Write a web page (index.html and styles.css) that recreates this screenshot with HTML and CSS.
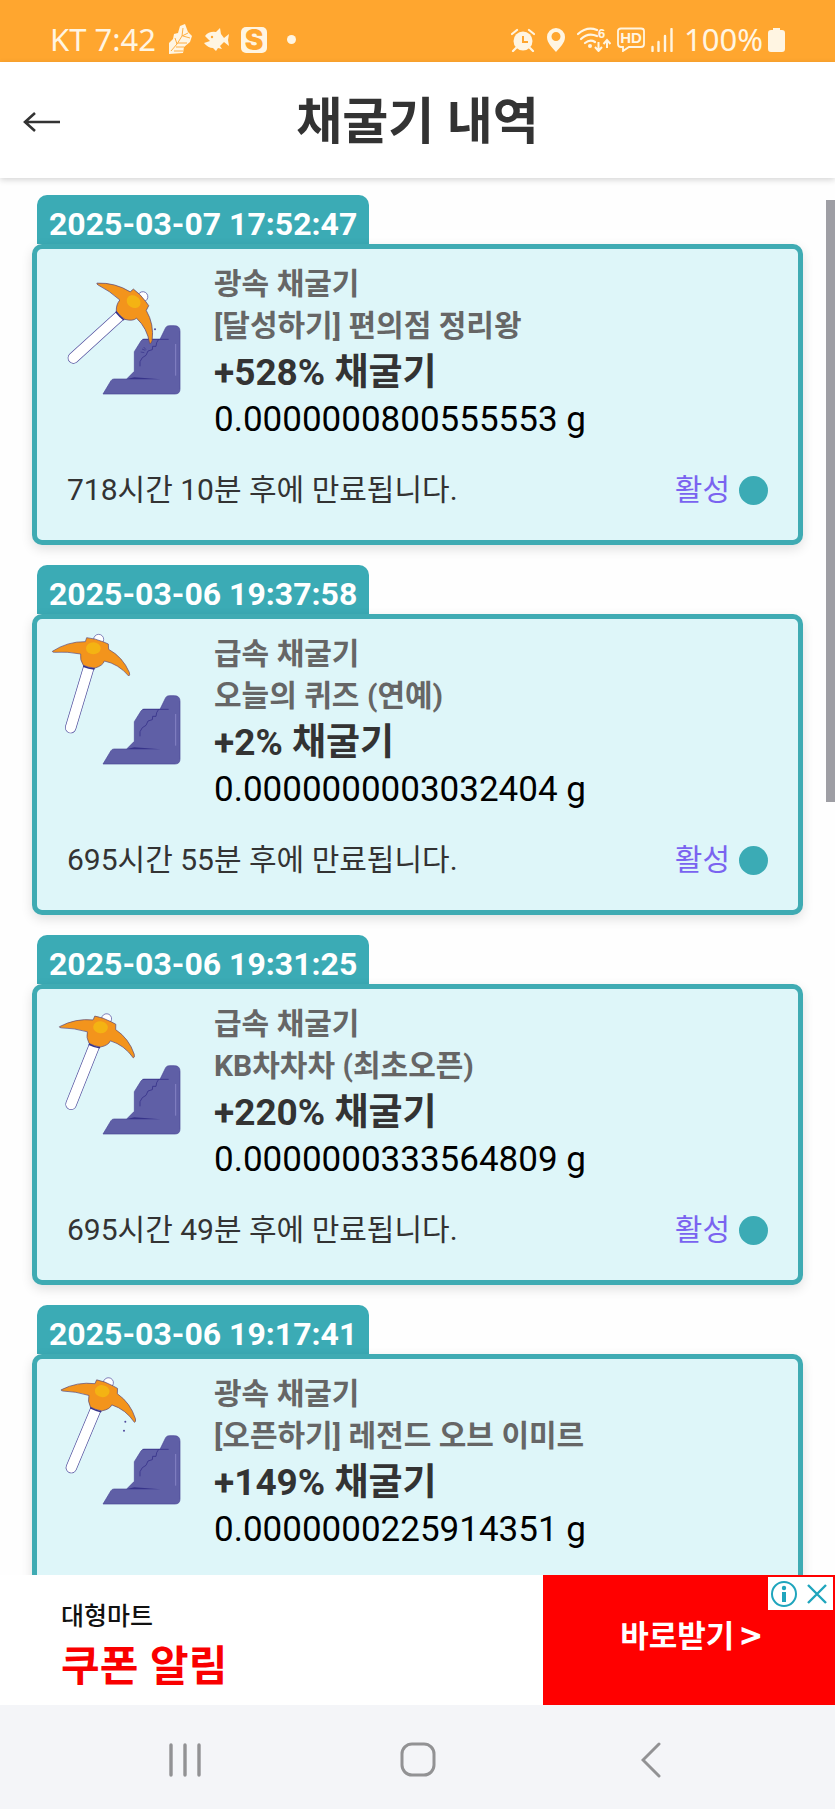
FILE: index.html
```html
<!DOCTYPE html>
<html lang="ko">
<head>
<meta charset="utf-8">
<meta name="viewport" content="width=device-width, initial-scale=1">
<title>채굴기 내역</title>
<link rel="stylesheet" href="styles.css">
</head>
<body>
<svg class="defs" aria-hidden="true">
  <symbol id="rock" viewBox="0 0 480 480">
    <path d="M198 435 L222 395 Q225 390 231 390 H269 L292 367 V308 L312 276 Q315 271 321 271 H369 L386 236 Q389 230 397 230 H412 Q429 230 429 247 V420 Q429 435 414 435 Z" fill="#5f5fa6" stroke="#4a4696" stroke-width="2"/>
    <path d="M317 271 H395 M365 271 L359 281 L357 292 H347 L346 302 L333 306 L327 319 L316 326 L309 338 V352" fill="none" stroke="#37338a" stroke-width="2.500"/>
    <path d="M266 391 L292 385 L370 391 Z" fill="#37338a"/>
    <path d="M416 285 V380" stroke="#8482c4" stroke-width="3"/>
  </symbol>
  <symbol id="pick" viewBox="0 0 480 480" overflow="visible">
    <path d="M156 143 L101 326" stroke="#4f4a9c" stroke-width="34" stroke-linecap="round"/>
    <path d="M156 143 L101 326" stroke="#fff" stroke-width="30" stroke-linecap="round"/>
    <circle cx="185" cy="61" r="15" fill="#fff" stroke="#4f4a9c" stroke-width="2"/>
    <path d="M46 97 Q92 67 145 68 L149 56 Q174 58 200 69 L214 75 L215 91 Q257 114 277 160 Q280 170 275 171 Q245 135 202 126 Q198 140 174 147 Q154 146 139 139 Q128 122 131 105 Q90 97 52 100 Q46 100 46 97 Z" fill="#f3941c" stroke="#5a4778" stroke-width="2"/>
    <path d="M139 139 Q154 146 174 148 L172 152 Q154 150 138 144 Z" fill="#37338a"/>
    <ellipse cx="169" cy="88" rx="22" ry="18" fill="#f4b313"/>
  </symbol>
</svg>

<div class="app">
  <div class="status">
    <div class="status-group">
      <span class="status-text">KT 7:42</span>
      <svg width="24" height="31" viewBox="0 0 24 31"><path d="M1 19 L5 15 L6 10 L10 9 L12 2 L17 0 L20 8 L24 12 L22 18 L16 23 L15 29 L1 30 Z" fill="#fff5e2"/><path d="M3 27 L9 20 L14 12 L20 9 M9 20 L7 14 M10 19 L19 19 M8 23 L16 23 M6 27 L15 27 M15 12 L22 14 M14 12 L15 4" fill="none" stroke="#ffa62f" stroke-width="0.900"/></svg>
      <svg width="25" height="23" viewBox="0 0 25 23"><path d="M1 8 Q5 3 12 4 L16 0 L17 6 L20 10 L25 6 L24 12 L25 18 L20 14 L16 18 L18 21 L14 20 L12 23 L9 20 Q4 20 0 15 L6 13 Z" fill="#fff5e2"/><circle cx="8" cy="9" r="1.200" fill="#ffa62f"/></svg>
      <span class="s-badge">S</span>
      <span class="dot"></span>
    </div>
    <div class="status-group status-right">
      <svg class="spaced" width="24" height="24" viewBox="0 0 24 24"><circle cx="12" cy="13" r="9.500" fill="#fff5e2"/><path d="M1 6 L6 2 M23 6 L18 2 M5 20 L2 23 M19 20 L22 23" stroke="#fff5e2" stroke-width="2.200" stroke-linecap="round"/><path d="M12 8 V14 H17" fill="none" stroke="#ffa62f" stroke-width="2"/></svg>
      <svg class="spaced" width="20" height="24" viewBox="0 0 20 24"><path fill-rule="evenodd" d="M10 0 A9 9 0 0 1 19 9 C19 15 14 19 10 24 C6 19 1 15 1 9 A9 9 0 0 1 10 0 Z M10 4 A4.500 4.500 0 1 0 10 13 A4.500 4.500 0 1 0 10 4 Z" fill="#fff5e2"/></svg>
      <svg width="34" height="25" viewBox="0 0 34 25"><path d="M1 7 Q10 -1 20 3 M4 12 Q11 5 20 9 M8 16 Q13 12 18 15" fill="none" stroke="#fff5e2" stroke-width="2.200" stroke-linecap="round"/><circle cx="13" cy="19" r="2" fill="#fff5e2"/><path d="M21.500 15 V23 M18 20 L21.500 24 L25 20 M30 21 V14 M26.500 17 L30 13 L33.500 17" fill="none" stroke="#fff5e2" stroke-width="2"/><text x="21" y="11" class="tiny">6</text></svg>
      <svg width="28" height="25" viewBox="0 0 28 25"><path d="M4 1.500 H24 Q27 1.500 27 4 V17 Q27 20 24 20 H12 L6 24 V20 H4 Q1 20 1 17 V4 Q1 1.500 4 1.500 Z" fill="none" stroke="#fff5e2" stroke-width="1.800"/><text x="14" y="16" text-anchor="middle" class="tiny hd">HD</text></svg>
      <svg class="spaced" width="22" height="24" viewBox="0 0 22 24"><path d="M1.500 19 V23 M7.500 14 V23 M14 8 V23 M20.500 1 V23" stroke="#fff5e2" stroke-width="2.400" stroke-linecap="round"/></svg>
      <span class="power"><span class="status-text">100%</span>
      <svg width="17" height="24" viewBox="0 0 17 24"><path d="M5 0 H12 V2 H14 Q17 2 17 5 V21 Q17 24 14 24 H3 Q0 24 0 21 V5 Q0 2 3 2 H5 Z" fill="#fff5e2"/></svg></span>
    </div>
  </div>

  <header class="header">
    <button class="back" aria-label="뒤로"><svg width="38" height="20" viewBox="0 0 38 20"><path d="M37 10 H2 M12 1 L2 10 L12 19" fill="none" stroke="#333" stroke-width="2.600"/></svg></button>
    <h1 class="title">채굴기 내역</h1>
  </header>

  <main class="list">
    <article class="entry">
      <time class="date">2025-03-07 17:52:47</time>
      <div class="card">
        <div class="info">
          <svg class="art" viewBox="0 0 480 480"><use href="#rock"/><g transform="translate(8 1) rotate(31 101 326)"><use href="#pick"/></g><path d="M315 300 l10 4 M311 309 l11 2 M320 294 l7 8" stroke="#37338a" stroke-width="2"/><circle cx="354" cy="241" r="3" fill="#4f4a9c"/></svg>
          <div class="lines">
            <p class="name">광속 채굴기</p>
            <p class="name">[달성하기] 편의점 정리왕</p>
            <p class="boost">+528% 채굴기</p>
            <p class="amount">0.0000000800555553 g</p>
          </div>
        </div>
        <div class="foot"><span>718시간 10분 후에 만료됩니다.</span><span class="state">활성</span></div>
      </div>
    </article>
    <article class="entry">
      <time class="date">2025-03-06 19:37:58</time>
      <div class="card">
        <div class="info">
          <svg class="art" viewBox="0 0 480 480"><use href="#rock"/><use href="#pick"/></svg>
          <div class="lines">
            <p class="name">급속 채굴기</p>
            <p class="name">오늘의 퀴즈 (연예)</p>
            <p class="boost">+2% 채굴기</p>
            <p class="amount">0.0000000003032404 g</p>
          </div>
        </div>
        <div class="foot"><span>695시간 55분 후에 만료됩니다.</span><span class="state">활성</span></div>
      </div>
    </article>
    <article class="entry">
      <time class="date">2025-03-06 19:31:25</time>
      <div class="card">
        <div class="info">
          <svg class="art" viewBox="0 0 480 480"><use href="#rock"/><g transform="translate(1 20) rotate(5 101 326)"><use href="#pick"/></g></svg>
          <div class="lines">
            <p class="name">급속 채굴기</p>
            <p class="name">KB차차차 (최초오픈)</p>
            <p class="boost">+220% 채굴기</p>
            <p class="amount">0.0000000333564809 g</p>
          </div>
        </div>
        <div class="foot"><span>695시간 49분 후에 만료됩니다.</span><span class="state">활성</span></div>
      </div>
    </article>
    <article class="entry">
      <time class="date">2025-03-06 19:17:41</time>
      <div class="card">
        <div class="info">
          <svg class="art" viewBox="0 0 480 480"><use href="#rock"/><g transform="translate(2 0) rotate(6 101 326)"><use href="#pick"/></g><circle cx="265" cy="188" r="3" fill="#4f4a9c"/><circle cx="261" cy="215" r="3" fill="#4f4a9c"/></svg>
          <div class="lines">
            <p class="name">광속 채굴기</p>
            <p class="name">[오픈하기] 레전드 오브 이미르</p>
            <p class="boost">+149% 채굴기</p>
            <p class="amount">0.0000000225914351 g</p>
          </div>
        </div>
        <div class="foot"></div>
      </div>
    </article>
    <div class="thumb"></div>
  </main>

  <aside class="ad">
    <div class="ad-copy">
      <p class="ad-small">대형마트</p>
      <p class="ad-big">쿠폰 알림</p>
    </div>
    <a class="ad-cta" href="#">바로받기 <span class="gt">&gt;</span></a>
    <div class="ad-badge">
      <button aria-label="광고 정보"><svg width="28" height="28" viewBox="0 0 28 28"><circle cx="14" cy="14" r="12" fill="none" stroke="#1fa5bd" stroke-width="2"/><circle cx="14" cy="8" r="2.200" fill="#1fa5bd"/><path d="M14 12 V22" stroke="#1fa5bd" stroke-width="4"/></svg></button>
      <button aria-label="광고 닫기"><svg width="24" height="24" viewBox="0 0 24 24"><path d="M3 3 L21 21 M21 3 L3 21" stroke="#1fa5bd" stroke-width="2.400"/></svg></button>
    </div>
  </aside>

  <nav class="nav">
    <button aria-label="최근 앱"><svg width="32" height="34" viewBox="0 0 32 34"><path d="M2 2 V32 M16 2 V32 M30 2 V32" stroke="#929294" stroke-width="3.400" stroke-linecap="round"/></svg></button>
    <button aria-label="홈"><svg width="36" height="36" viewBox="0 0 36 36"><rect x="2" y="2" width="32" height="31" rx="10" fill="none" stroke="#929294" stroke-width="3"/></svg></button>
    <button aria-label="이전"><svg width="20" height="36" viewBox="0 0 20 36"><path d="M18 2 L2 18 L18 34" fill="none" stroke="#929294" stroke-width="3" stroke-linecap="round"/></svg></button>
  </nav>
</div>
</body>
</html>
```

FILE: styles.css
```css
* { box-sizing: border-box; }
body { margin: 0; font-family: Roboto, "Noto Sans CJK KR", sans-serif; background: #fff; color: #333; }
p, h1 { margin: 0; }
button { border: 0; background: none; padding: 0; display: flex; align-items: center; justify-content: center; }
svg { display: block; flex: none; }
.defs { position: absolute; width: 0; height: 0; }
.app { height: 100vh; display: flex; flex-direction: column; overflow: hidden; }

.status { flex: none; height: 62px; padding: 17px 50px 0; background: #ffa62f; display: flex; justify-content: space-between; }
.status-group { display: flex; align-items: center; gap: 12px; }
.status-right { gap: 6px; }
.spaced { margin-right: 5px; }
.status-text { font: 31px/45px "Noto Sans", sans-serif; color: #fff5e2; }
.s-badge { width: 26px; height: 26px; border-radius: 5px; background: #fff5e2; color: #ffa62f; font: 900 28px/26px Inter, sans-serif; text-align: center; }
.dot { width: 9px; height: 9px; margin-left: 8px; border-radius: 50%; background: #fff5e2; }
.tiny { font: 700 13px "Liberation Sans", sans-serif; fill: #fff5e2; }
.hd { font-size: 15px; }
.power { display: flex; align-items: center; gap: 5px; }

.header { flex: none; height: 116px; padding: 4px 23px 0; display: grid; grid-template-columns: 38px 1fr 38px; align-items: center; background: #fff; box-shadow: 0 2px 6px rgba(0, 0, 0, .16); z-index: 1; }
.back { height: 48px; }
.title { font-size: 50px; line-height: 72px; font-weight: 700; text-align: center; }

.list { flex: 1; min-height: 0; overflow: hidden; position: relative; padding: 17px 32px 0; background: #fefefe; }
.entry { margin-bottom: 20px; }
.date { display: block; width: fit-content; margin-left: 5px; padding: 11px 12px 2px; border-radius: 10px 10px 0 0; background: #3babb5; color: #fff; font-size: 32px; line-height: 36px; font-weight: 700; }
.card { height: 301px; border: 5px solid #3fabb3; border-radius: 10px; background: #def6f9; padding-top: 14px; box-shadow: 0 4px 12px rgba(0, 0, 0, .12); }
.info { display: flex; gap: 17px; }
.art { width: 160px; height: 160px; margin-top: -14px; }
.lines { white-space: nowrap; }
.name { font-size: 30px; line-height: 42px; font-weight: 700; color: #666; }
.boost { font-size: 37px; line-height: 52px; font-weight: 700; }
.amount { font-size: 35px; line-height: 42px; color: #000; }
.foot { margin-top: 27px; padding: 0 30px; display: flex; justify-content: space-between; align-items: center; font-size: 30px; line-height: 44px; }
.state { display: flex; align-items: center; gap: 9px; color: #7a63f0; }
.state::after { content: ""; width: 29px; height: 29px; border-radius: 50%; background: #3babb5; }
.thumb { position: absolute; top: 22px; right: 0; width: 9px; height: 602px; background: #9e9ea4; }

.ad { flex: none; height: 130px; display: flex; position: relative; background: #fff; font-family: "Noto Sans CJK KR", sans-serif; z-index: 1; }
.ad-copy { flex: 1; padding: 21px 0 0 61px; }
.ad-small { font-size: 25px; line-height: 37px; font-weight: 500; color: #111; }
.ad-big { font-size: 42px; line-height: 60px; font-weight: 700; color: #f90000; }
.ad-cta { width: 35%; display: flex; align-items: center; justify-content: center; gap: 6px; padding: 0 0 12px 4px; background: #f00; color: #fff; font-size: 31px; line-height: 44px; font-weight: 700; text-decoration: none; }
.gt { font-size: 36px; }
.ad-badge { position: absolute; top: 2px; right: 2px; width: 65px; height: 33px; padding: 0 4px 0 2px; display: flex; justify-content: space-between; background: #fff; }

.nav { flex: none; height: 104px; padding: 0 68px; display: flex; background: #f4f5f8; }
.nav button { flex: 1; }
.nav svg { margin-top: 6px; }
```
